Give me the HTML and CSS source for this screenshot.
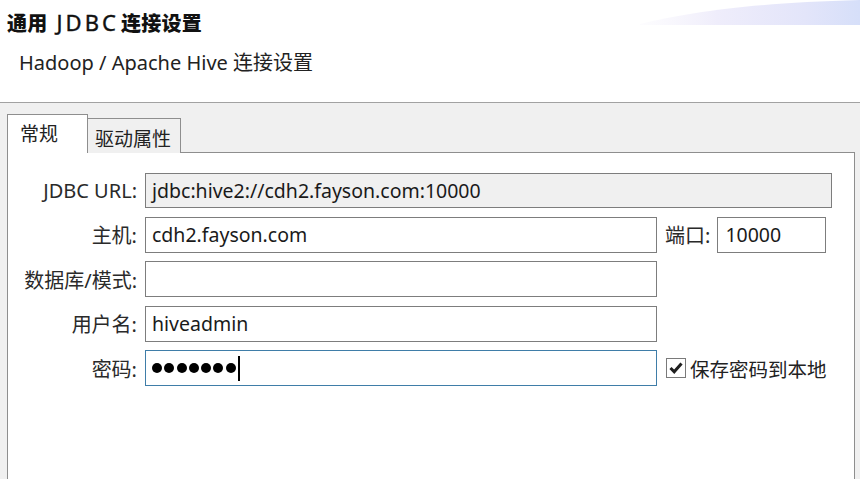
FILE: index.html
```html
<!DOCTYPE html>
<html lang="zh-CN">
<head>
<meta charset="utf-8">
<title>通用 JDBC 连接设置</title>
<link rel="stylesheet" href="styles.css">
</head>
<body>
<div class="header">
  <svg class="swoosh" width="220" height="30" viewBox="0 0 220 30" aria-hidden="true">
    <defs>
      <linearGradient id="sw" x1="0" y1="0" x2="1" y2="0">
        <stop offset="0" stop-color="#f4f2fb" stop-opacity="0.2"/>
        <stop offset="0.35" stop-color="#efedfb"/>
        <stop offset="0.75" stop-color="#e3e5fa"/>
        <stop offset="1" stop-color="#d6dff9"/>
      </linearGradient>
    </defs>
    <path d="M0 24 C 50 12, 110 3, 220 0 L220 25 L0 25 Z" fill="url(#sw)"/>
  </svg>
  <div class="title"><span>通用</span><span class="title-latin">JDBC</span><span>连接设置</span></div>
  <div class="subtitle">Hadoop / Apache Hive 连接设置</div>
</div>
<div class="main">
  <div class="tabs">
    <div class="tab active">常规</div>
    <div class="tab">驱动属性</div>
  </div>
  <div class="panel">
    <div class="form">
      <div class="row">
        <div class="label">JDBC URL:</div>
        <div class="field readonly url">jdbc:hive2://cdh2.fayson.com:10000</div>
      </div>
      <div class="row">
        <div class="label">主机:</div>
        <div class="field wide">cdh2.fayson.com</div>
        <div class="label port-label">端口:</div>
        <div class="field port">10000</div>
      </div>
      <div class="row">
        <div class="label">数据库/模式:</div>
        <div class="field wide"></div>
      </div>
      <div class="row">
        <div class="label">用户名:</div>
        <div class="field wide">hiveadmin</div>
      </div>
      <div class="row">
        <div class="label">密码:</div>
        <div class="field wide focus">
          <span class="dot"></span><span class="dot"></span><span class="dot"></span><span class="dot"></span><span class="dot"></span><span class="dot"></span><span class="dot"></span><span class="caret"></span>
        </div>
        <div class="check">
          <span class="box">
            <svg width="16" height="16" viewBox="0 0 16 16" aria-hidden="true"><path d="M2.5 8 L6.2 11.8 L13.5 3.5" fill="none" stroke="#1f1f1f" stroke-width="3"/></svg>
          </span>
          <span class="check-text">保存密码到本地</span>
        </div>
      </div>
    </div>
  </div>
</div>
</body>
</html>
```
FILE: styles.css
```css
html, body {
  margin: 0;
  padding: 0;
  width: 860px;
  height: 479px;
  overflow: hidden;
  background: #f0f0f0;
  font-family: "Noto Sans", "Noto Sans CJK SC", sans-serif;
  color: #1e1e1e;
}

.header {
  position: relative;
  height: 102px;
  background: #fff;
  border-bottom: 1px solid #a2a2a2;
}

.swoosh {
  position: absolute;
  top: 0;
  right: 0;
}

.title {
  display: flex;
  align-items: baseline;
  font-family: "Noto Sans CJK SC", sans-serif;
  font-weight: 900;
  font-size: 20px;
  line-height: 24px;
  padding: 10px 0 0 7px;
  color: #111;
  letter-spacing: 0.3px;
}

.title-latin {
  font-family: "Noto Sans", sans-serif;
  font-weight: normal;
  font-size: 22px;
  letter-spacing: 3px;
  margin: 0 2px 0 9px;
  -webkit-text-stroke: 0.4px #111;
}

.subtitle {
  font-size: 20px;
  line-height: 24px;
  padding: 16px 0 0 19px;
  color: #222;
}

.main {
  padding: 11px 5px 0 7px;
}

.tabs {
  display: flex;
  align-items: flex-end;
  position: relative;
  z-index: 1;
  margin-bottom: -1px;
}

.tab {
  font-family: "Noto Sans CJK SC", sans-serif;
  font-size: 19px;
  line-height: 22px;
  color: #222;
  box-sizing: border-box;
  border: 1px solid #8e8e8e;
  border-bottom: none;
  background: #f0f0f0;
  height: 35px;
  width: 93px;
  padding: 8px 0 0 7px;
  border-left: none;
}

.tab.active {
  background: #fff;
  width: 81px;
  height: 39px;
  padding: 7px 0 0 12px;
  border-left: 1px solid #8e8e8e;
}

.panel {
  background: #fff;
  border: 1px solid #8e8e8e;
  height: 340px;
}

.form {
  display: flex;
  flex-direction: column;
  gap: 8.5px;
  padding-top: 19px;
}

.row {
  display: flex;
  align-items: center;
  height: 36px;
}

.label {
  width: 129px;
  margin-right: 8px;
  text-align: right;
  font-size: 20px;
  color: #2a2a2a;
  white-space: nowrap;
}

.field {
  box-sizing: border-box;
  height: 36px;
  border: 1px solid #7d7d7d;
  background: #fff;
  font-size: 19.5px;
  line-height: 33px;
  padding-left: 6px;
  color: #1a1a1a;
  white-space: nowrap;
  display: flex;
  align-items: center;
}

.field.readonly {
  background: #f0f0f0;
  height: 35px;
}

.field.url { width: 687px; }
.field.wide { width: 512px; }

.port-label {
  width: auto;
  margin: 0 7px 0 8px;
}

.field.port {
  width: 109px;
  padding-left: 7px;
}

.field.focus {
  border-color: #3f7da8;
}

.dot {
  width: 10px;
  height: 10px;
  border-radius: 50%;
  background: #000;
  margin-right: 2.3px;
}

.caret {
  width: 2px;
  height: 25px;
  background: #000;
  margin-left: 0;
}

.check {
  display: flex;
  align-items: center;
  margin-left: 9px;
}

.box {
  box-sizing: border-box;
  width: 20px;
  height: 20px;
  border: 1px solid #7a7a7a;
  background: #fff;
  display: flex;
  align-items: center;
  justify-content: center;
}

.check-text {
  margin-left: 4px;
  font-size: 19.5px;
  color: #222;
}
```
